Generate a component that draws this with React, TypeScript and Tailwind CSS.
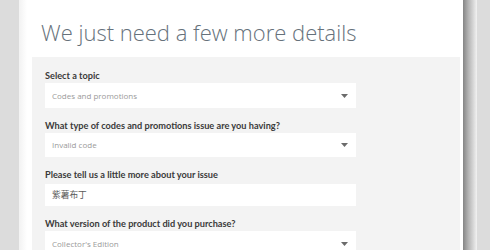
import React from "react";

function Caret() {
  return (
    <svg width="7" height="4" viewBox="0 0 7 4" className="shrink-0">
      <path d="M0 0 L7 0 L3.5 4 Z" fill="#6b6b6b" />
    </svg>
  );
}

function Field({
  label,
  value,
  select,
  dark,
  cjk,
  h,
  mt,
}: {
  label: string;
  value: string;
  select?: boolean;
  dark?: boolean;
  cjk?: boolean;
  h: string;
  mt: string;
}) {
  return (
    <div className="flex flex-col shrink-0">
      <div
        className="text-[9.2px] font-bold text-[#3a3a3a] leading-[12px] h-[12px]"
        style={{ fontFamily: 'Lato, "Open Sans", sans-serif' }}
      >
        {label}
      </div>
      <div className={"w-[311px] bg-white flex items-center justify-between pl-[7px] pr-[8px] shrink-0 " + h + " " + mt}>
        <span
          className={
            "leading-none " + (dark ? "text-[8.7px] text-[#5a5a5a]" : "text-[8px] text-[#9a9a9a]")
          }
          style={cjk ? { fontFamily: '"Noto Sans CJK SC", sans-serif' } : undefined}
        >
          {value}
        </span>
        {select ? <Caret /> : null}
      </div>
    </div>
  );
}

export default function App() {
  return (
    <div
      className="w-[490px] h-[250px] flex overflow-hidden bg-[#dddddd]"
      style={{ fontFamily: '"Open Sans", "Noto Sans CJK SC", sans-serif' }}
    >
      <div className="w-[19px] shrink-0 bg-[#dcdcdc]" />
      <div className="w-[444px] shrink-0 flex flex-col bg-[linear-gradient(to_right,#f2f2f2,#ffffff_8px)]">
        <div className="h-[57px] shrink-0 pl-[22px] pt-[19px]">
          <div className="text-[22px] font-light text-[#66717b] leading-[26px]">
            We just need a few more details
          </div>
        </div>
        <div className="ml-[13px] w-[428px] flex-1 bg-[#f3f3f3] pl-[13px] pt-[13px] flex flex-col gap-[12px]">
          <Field label="Select a topic" value="Codes and promotions" select h="h-[25px]" mt="mt-[1px]" />
          <Field
            label="What type of codes and promotions issue are you having?"
            value="Invalid code"
            select
            h="h-[24px]"
            mt="mt-[1px]"
          />
          <Field
            label="Please tell us a little more about your issue"
            value="紫薯布丁"
            dark
            cjk
            h="h-[22px]"
            mt="mt-[3px]"
          />
          <Field
            label="What version of the product did you purchase?"
            value="Collector's Edition"
            select
            h="h-[25px]"
            mt="mt-[1px]"
          />
        </div>
      </div>
      <div className="w-[14px] shrink-0 bg-[linear-gradient(to_right,#858585,#b5b5b5_40%,#f2f2f2)]" />
      <div className="flex-1 bg-[#dcdcdc]" />
    </div>
  );
}
